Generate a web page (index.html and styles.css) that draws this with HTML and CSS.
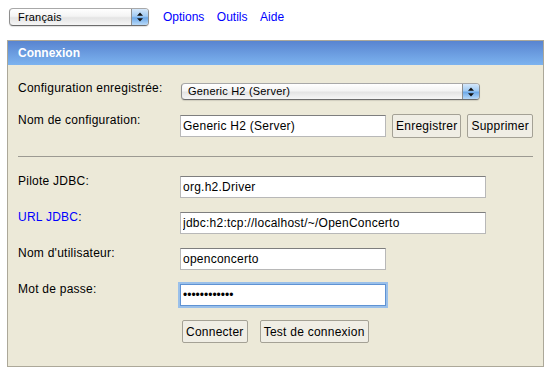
FILE: index.html
```html
<!DOCTYPE html>
<html>
<head>
  <title>Console H2 - Connexion</title>
  <link rel="stylesheet" href="styles.css">
</head>
<body>
  <div class="topbar">
    <div class="aqua-select lang">
      <span class="value">Français</span>
      <span class="arrows"><svg width="6" height="10" viewBox="0 0 6 10"><path d="M3 0.5 L6 3.8 H0Z M0 6.2 H6 L3 9.5Z"/></svg></span>
    </div>
    <nav class="menu">
      <a href="#">Options</a>
      <a href="#">Outils</a>
      <a href="#">Aide</a>
    </nav>
  </div>

  <div class="panel">
    <div class="panel-head">Connexion</div>
    <div class="panel-body">
      <div class="row row-saved">
        <label>Configuration enregistrée:</label>
        <div class="aqua-select config">
          <span class="value">Generic H2 (Server)</span>
          <span class="arrows"><svg width="6" height="10" viewBox="0 0 6 10"><path d="M3 0.5 L6 3.8 H0Z M0 6.2 H6 L3 9.5Z"/></svg></span>
        </div>
      </div>
      <div class="row row-name">
        <label>Nom de configuration:</label>
        <input class="field short" type="text" value="Generic H2 (Server)">
        <button class="btn save">Enregistrer</button>
        <button class="btn remove">Supprimer</button>
      </div>

      <hr class="sep">

      <div class="row">
        <label>Pilote JDBC:</label>
        <input class="field wide" type="text" value="org.h2.Driver">
      </div>
      <div class="row">
        <label><a href="#" class="help">URL JDBC</a>:</label>
        <input class="field wide" type="text" value="jdbc:h2:tcp://localhost/~/OpenConcerto">
      </div>
      <div class="row">
        <label>Nom d'utilisateur:</label>
        <input class="field short" type="text" value="openconcerto">
      </div>
      <div class="row row-pass">
        <label>Mot de passe:</label>
        <input class="field short focus" type="password" value="openconcerto">
      </div>
      <div class="actions">
        <button class="btn">Connecter</button>
        <button class="btn">Test de connexion</button>
      </div>
    </div>
  </div>
</body>
</html>
```

FILE: styles.css
```css
body {
  margin: 0;
  font-family: "Liberation Sans", Arial, sans-serif;
  font-size: 12px;
  color: #000;
  background: #fff;
}

.topbar {
  display: flex;
  align-items: center;
  height: 18px;
  padding: 8px 0 0 9px;
}

.menu {
  display: flex;
  gap: 12.5px;
  margin-left: 14px;
}

.menu a {
  color: #0000ff;
  text-decoration: none;
  line-height: 14px;
}

/* mac style popup */
.aqua-select {
  display: flex;
  box-sizing: border-box;
  height: 18px;
  border: 1px solid #8e8e8e;
  border-top-color: #a8a8a8;
  border-bottom-color: #6c6c6c;
  border-radius: 4px;
  background: linear-gradient(#ffffff, #f4f4f4 45%, #e4e4e4 55%, #f6f6f6);
  box-shadow: 0 1px 1px rgba(0, 0, 0, 0.12);
  overflow: hidden;
  font-size: 11px;
  letter-spacing: 0.2px;
}

.aqua-select .value {
  flex: 1;
  padding-left: 8px;
  line-height: 16px;
  white-space: nowrap;
}

.aqua-select .arrows {
  width: 16px;
  display: flex;
  align-items: center;
  justify-content: center;
  border-left: 1px solid #8e8e8e;
  background: linear-gradient(#d4e7fa, #a2cbf3 45%, #6da9e8 55%, #b8d9f8);
}

.aqua-select svg {
  fill: #111;
}

.lang {
  width: 140px;
}

.config {
  width: 299px;
  height: 17px;
  margin: 2px 0 0 1px;
}

.config .value {
  padding-left: 6px;
  line-height: 15px;
}

.panel {
  box-sizing: border-box;
  width: 537px;
  margin: 14px 0 0 7px;
  border: 1px solid #aca899;
  background: #ece9d8;
}

.panel-head {
  height: 24px;
  line-height: 24px;
  padding-left: 10px;
  color: #fff;
  font-weight: bold;
  background: linear-gradient(#5884d0, #7cb3ef);
}

.panel-body {
  padding: 16px 10px 23px;
  letter-spacing: 0.25px;
}

.row {
  display: flex;
  align-items: flex-start;
  margin-bottom: 12px;
}

.row label {
  flex: none;
  width: 162px;
  line-height: 14px;
}

.row-saved {
  margin-bottom: 13px;
}

.row-pass {
  margin-bottom: 14px;
}

.help {
  color: #0000ff;
  text-decoration: none;
}

.field {
  box-sizing: border-box;
  height: 22px;
  margin: 2px 0 0;
  padding: 0 2px;
  border: 1px solid #b8b8b8;
  border-top-color: #7e7e7e;
  background: #fff;
  font: inherit;
  letter-spacing: inherit;
  color: #000;
  outline: none;
}

.wide {
  width: 306px;
}

.short {
  width: 206px;
}

.field.focus {
  border-color: #5f93d3;
  box-shadow: 0 0 0 2px #9ac0ea;
  letter-spacing: 0;
}

.btn {
  box-sizing: border-box;
  height: 24px;
  margin-top: 1px;
  padding: 0 3px;
  border: 1px solid #a4a195;
  border-radius: 2px;
  background: #f0eee5;
  font: inherit;
  letter-spacing: inherit;
  color: #000;
}

.save {
  margin-left: 6px;
}

.remove {
  margin-left: 6px;
}

.sep {
  height: 1px;
  margin: 18px 0 17px;
  border: 0;
  background: #9c9a92;
}

.actions {
  display: flex;
  gap: 12px;
  margin-left: 164px;
}

.actions .btn {
  height: 23px;
  margin: 0;
}
```
